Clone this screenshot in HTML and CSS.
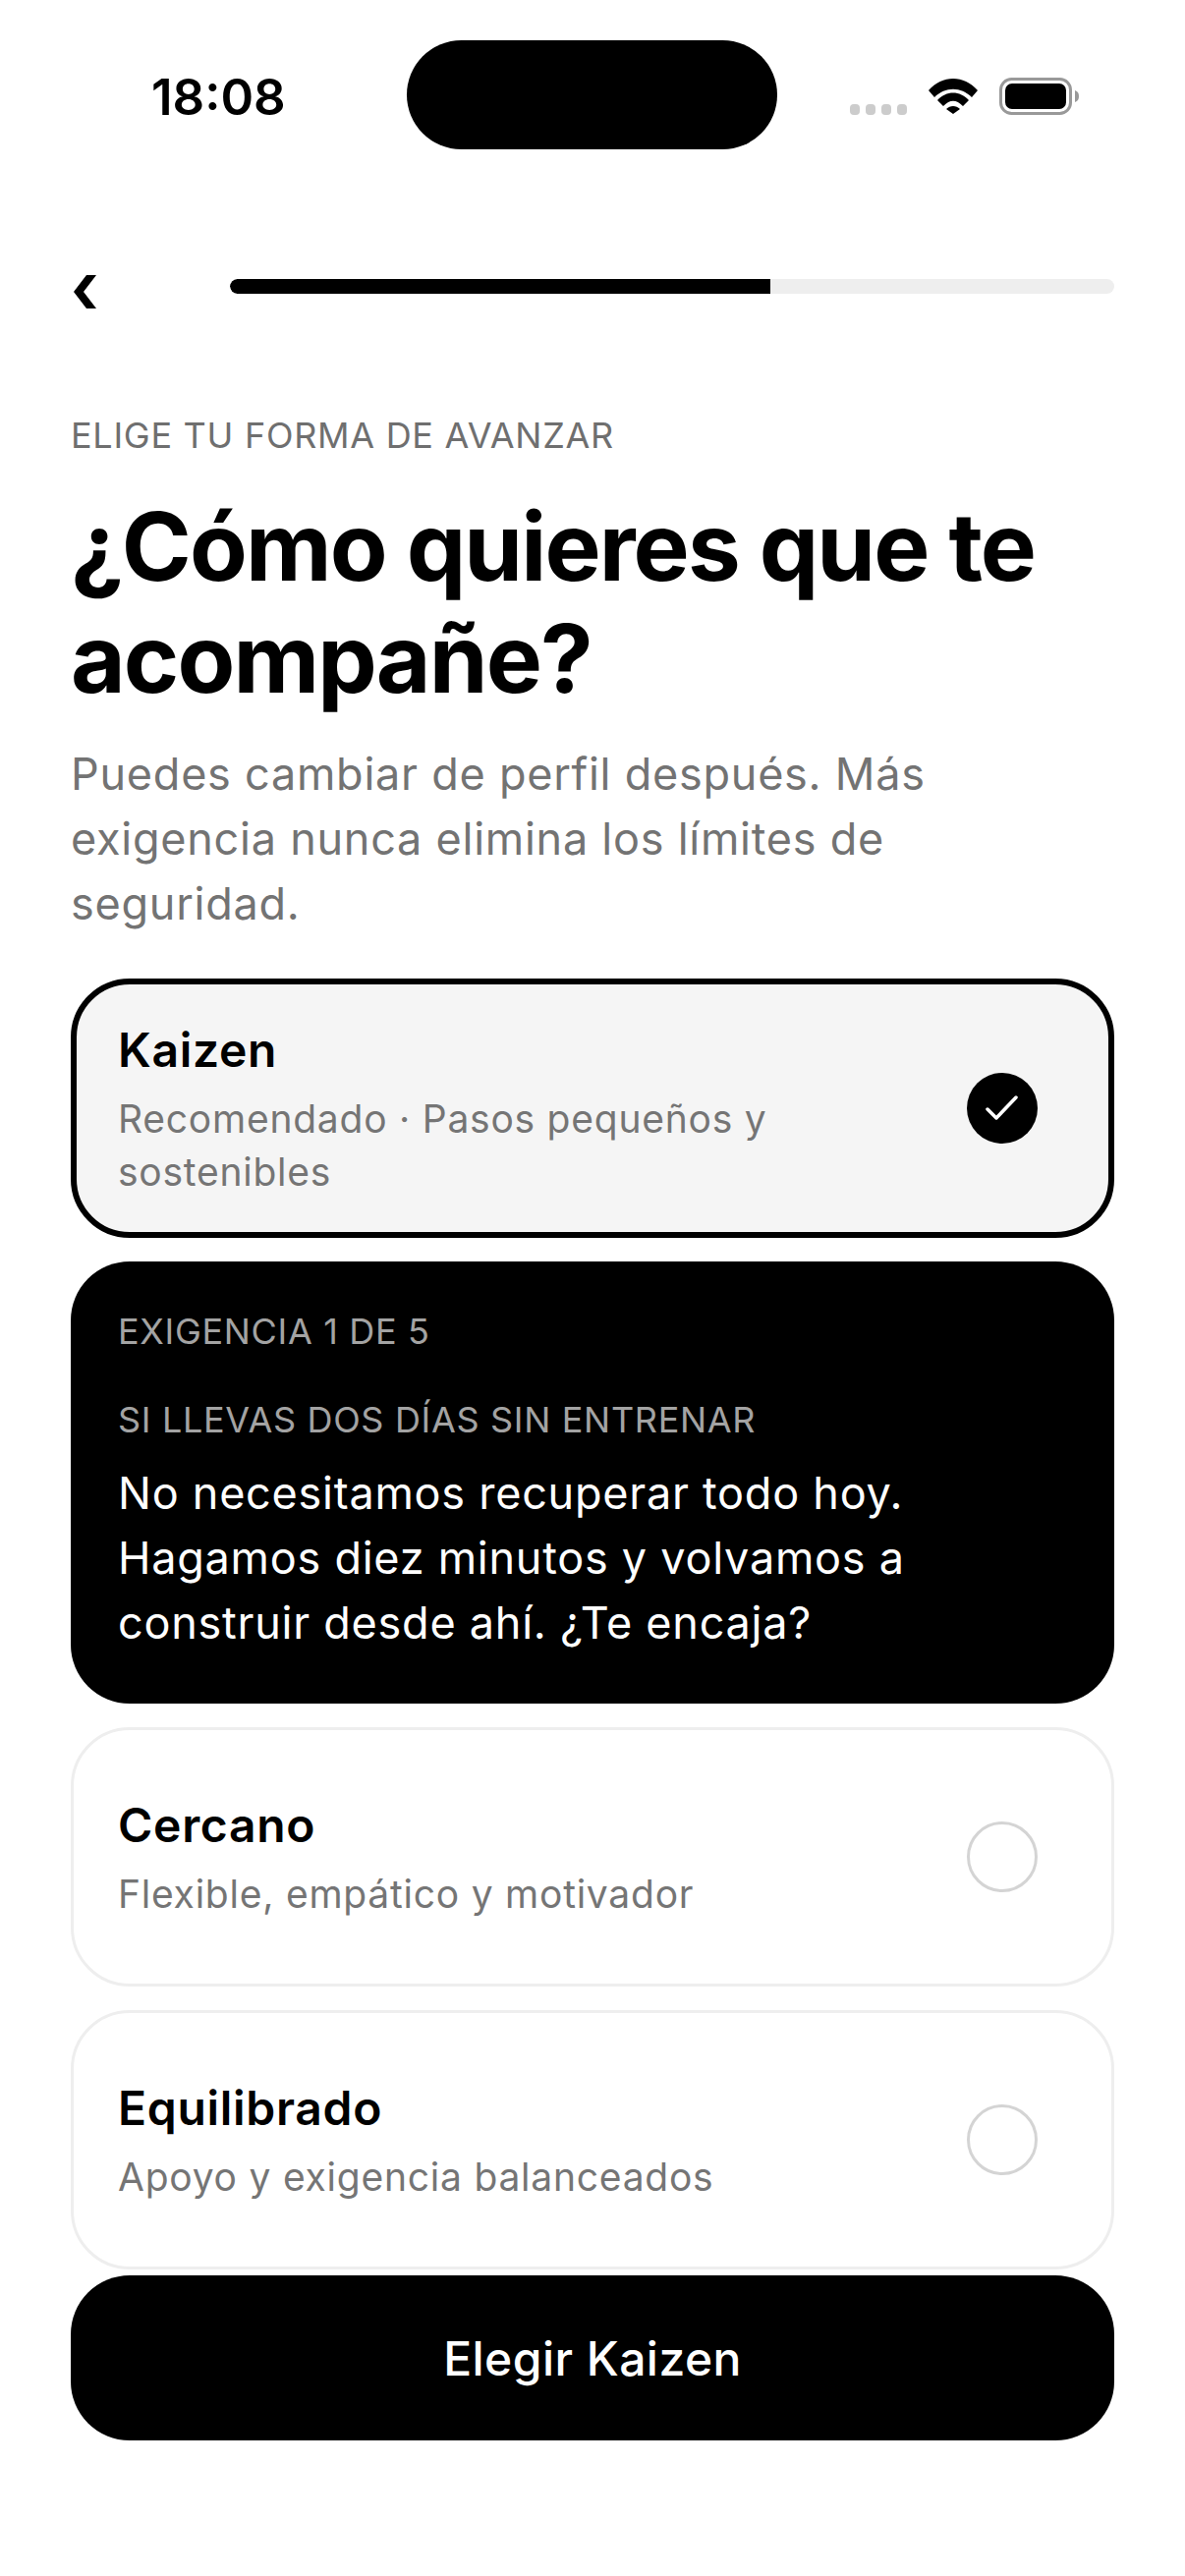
FILE: index.html
```html
<!DOCTYPE html>
<html lang="es">
<head>
    <meta charset="UTF-8">
    <meta name="viewport" content="width=device-width, initial-scale=1.0">
    <title>Elige tu perfil</title>
    <link rel="stylesheet" href="styles.css">
</head>
<body>
    <div class="status-bar">
        <div class="status-time">18:08</div>
        <div class="island"></div>
        <div class="status-icons">
            <div class="signal"><span></span><span></span><span></span><span></span></div>
            <svg class="wifi" width="50" height="37" viewBox="0 0 50 37">
                <path d="M0 13 C14 -3 36 -3 50 13 L44 20 C33 9 17 9 6 20 Z" fill="#000"/>
                <path d="M9 23 C18 13 32 13 41 23 L35 29 C28 22 22 22 15 29 Z" fill="#000"/>
                <path d="M18 32 C22 28 28 28 32 32 L25 37 Z" fill="#000"/>
            </svg>
            <svg class="battery" width="82" height="38" viewBox="0 0 82 38">
                <rect x="1.5" y="1.5" width="71" height="35" rx="11" fill="none" stroke="#999" stroke-width="3"/>
                <rect x="6" y="6" width="62" height="26" rx="7" fill="#000"/>
                <path d="M77 13 C80 14 81 16 81 19 C81 22 80 24 77 25 Z" fill="#999"/>
            </svg>
        </div>
    </div>

    <div class="top-nav">
        <svg class="back" width="24" height="34" viewBox="0 0 24 34">
            <path d="M13 0 L23 0 L10 17 L23 34 L13 34 L0 17 Z" fill="#000"/>
        </svg>
        <div class="progress"><div class="progress-fill" style="width: 61.1%"></div></div>
    </div>

    <main class="content">
        <div class="eyebrow">ELIGE TU FORMA DE AVANZAR</div>
        <h1>¿Cómo quieres que te acompañe?</h1>
        <p class="lead">Puedes cambiar de perfil después. Más exigencia nunca elimina los límites de seguridad.</p>

        <div class="options">
            <div class="option selected">
                <div class="option-text">
                    <div class="option-name">Kaizen</div>
                    <div class="option-desc">Recomendado · Pasos pequeños y sostenibles</div>
                </div>
                <div class="radio checked">
                    <svg width="36" height="30" viewBox="0 0 36 30">
                        <path d="M3 16 L12 25 L32 4" fill="none" stroke="#fff" stroke-width="3.5" stroke-linecap="round" stroke-linejoin="round"/>
                    </svg>
                </div>
            </div>

            <div class="example">
                <div class="example-level">EXIGENCIA 1 DE 5</div>
                <div class="example-label">SI LLEVAS DOS DÍAS SIN ENTRENAR</div>
                <div class="example-quote">No necesitamos recuperar todo hoy. Hagamos diez minutos y volvamos a construir desde ahí. ¿Te encaja?</div>
            </div>

            <div class="option">
                <div class="option-text">
                    <div class="option-name">Cercano</div>
                    <div class="option-desc">Flexible, empático y motivador</div>
                </div>
                <div class="radio"></div>
            </div>

            <div class="option">
                <div class="option-text">
                    <div class="option-name">Equilibrado</div>
                    <div class="option-desc">Apoyo y exigencia balanceados</div>
                </div>
                <div class="radio"></div>
            </div>
        </div>

        <button class="cta">Elegir Kaizen</button>
    </main>
</body>
</html>
```

FILE: styles.css
```css
body {
    margin: 0;
    padding: 0;
    width: 1206px;
    height: 2622px;
    overflow: hidden;
    background-color: #fff;
    color: #000;
    font-family: Inter, "Liberation Sans", sans-serif;
}

.status-bar {
    display: grid;
    grid-template-columns: 414px 377px 1fr;
    align-items: center;
    height: 111px;
    padding-top: 41px;
}

.status-time {
    padding: 3px 0 0 154px;
    font-size: 51px;
    font-weight: 600;
    line-height: 1;
}

.island {
    height: 111px;
    background: #000;
    border-radius: 56px;
}

.status-icons {
    display: flex;
    align-items: center;
    gap: 22px;
    padding: 2px 0 0 74px;
}

.signal {
    display: flex;
    gap: 6px;
    align-self: flex-end;
    margin-bottom: 0;
}

.signal span {
    width: 10px;
    height: 11px;
    border-radius: 4px;
    background: #ccc;
}

.top-nav {
    display: flex;
    align-items: center;
    gap: 135px;
    height: 60px;
    margin-top: 109px;
    padding: 0 72px 0 75px;
}

.back {
    flex: none;
    margin-top: 12px;
}

.progress {
    flex: 1;
    height: 15px;
    border-radius: 8px;
    background: #eee;
    overflow: hidden;
}

.progress-fill {
    height: 100%;
    background: #000;
    border-radius: 8px 0 0 8px;
}

.content {
    padding: 0 72px;
}

.eyebrow {
    margin-top: 95px;
    font-size: 36px;
    line-height: 54px;
    letter-spacing: 0.72px;
    color: #6f6f6f;
}

h1 {
    margin: 29px 0 0;
    font-size: 96px;
    font-weight: 700;
    line-height: 114px;
    letter-spacing: -1.86px;
}

.lead {
    margin: 28px 0 0;
    font-size: 45px;
    line-height: 66px;
    letter-spacing: 0.75px;
    color: #737373;
}

.options {
    display: flex;
    flex-direction: column;
    gap: 24px;
    margin-top: 43px;
}

.option {
    display: flex;
    align-items: center;
    justify-content: space-between;
    box-sizing: border-box;
    height: 264px;
    padding: 0 75px 0 45px;
    border: 3px solid #eee;
    border-radius: 60px;
}

.option.selected {
    padding: 0 72px 0 42px;
    border: 6px solid #000;
    background: #f5f5f5;
}

.option-name {
    font-size: 48px;
    font-weight: 570;
    line-height: 66px;
    letter-spacing: 0.7px;
}

.option-desc {
    width: 780px;
    margin-top: 10px;
    font-size: 39px;
    line-height: 54px;
    letter-spacing: 0.76px;
    color: #757575;
}

.radio {
    flex: none;
    box-sizing: border-box;
    width: 72px;
    height: 72px;
    border: 3px solid #d4d4d4;
    border-radius: 50%;
}

.radio.checked {
    display: flex;
    align-items: center;
    justify-content: center;
    border: none;
    background: #000;
}

.example {
    box-sizing: border-box;
    height: 450px;
    padding: 44px 48px 0;
    border-radius: 60px;
    background: #000;
    color: #fff;
}

.example-level,
.example-label {
    font-size: 36px;
    line-height: 54px;
    letter-spacing: 0.68px;
    color: #a3a3a3;
}

.example-label {
    margin-top: 36px;
}

.example-quote {
    margin-top: 15px;
    font-size: 45px;
    line-height: 66px;
    letter-spacing: 0.75px;
}

.cta {
    display: block;
    width: 100%;
    height: 168px;
    margin-top: 6px;
    border: none;
    border-radius: 60px;
    background: #000;
    color: #fff;
    font-family: Inter, "Liberation Sans", sans-serif;
    font-size: 48px;
    font-weight: 550;
    letter-spacing: 0.45px;
}
```
